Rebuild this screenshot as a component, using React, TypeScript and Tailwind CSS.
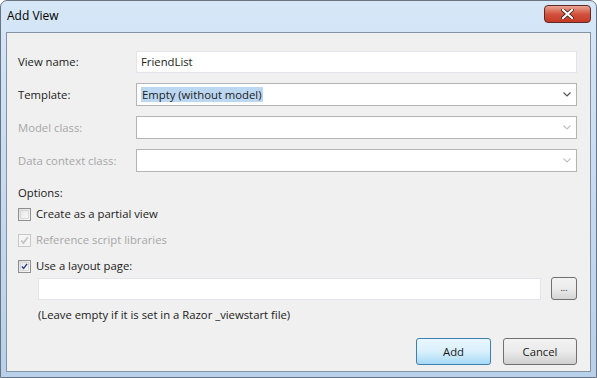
import React from "react";

const font = { fontFamily: '"Open Sans", "Noto Sans", Arial, sans-serif' };

function Chevron({ disabled }: { disabled?: boolean }) {
  return (
    <svg width="8" height="5" viewBox="0 0 8 5" className="mr-[5px]">
      <path d="M0.5 0.5 L4 4 L7.5 0.5" fill="none" stroke={disabled ? "#c2c2c2" : "#555"} strokeWidth="1.2" />
    </svg>
  );
}

function Combo({ children, disabled }: { children?: React.ReactNode; disabled?: boolean }) {
  return (
    <div className="flex-1 h-[23px] bg-white border border-[#b4b4b4] flex items-center justify-between">
      <div className="pl-[4px] flex items-center">{children}</div>
      <Chevron disabled={disabled} />
    </div>
  );
}

function CheckBox({ checked, disabled }: { checked?: boolean; disabled?: boolean }) {
  return (
    <div
      className={`w-[13px] h-[13px] border flex items-center justify-center ${
        disabled ? "border-[#c8c8c8] bg-[#f4f4f4]" : "border-[#8e8f8f] bg-gradient-to-br from-[#dcdcdc] to-[#fbfbfb]"
      }`}
    >
      <div className={`w-[9px] h-[9px] flex items-center justify-center ${disabled ? "" : "bg-gradient-to-br from-[#e6e6e6] to-[#fafafa] border border-[#d8d8d8]"}`}>
        {checked && (
          <svg width="9" height="9" viewBox="0 0 9 9">
            <path d="M1.2 4.5 L3.4 7 L7.8 1.2" fill="none" stroke={disabled ? "#c4c4c4" : "#2a3f8f"} strokeWidth="1.8" />
          </svg>
        )}
      </div>
    </div>
  );
}

export default function App() {
  return (
    <div className="w-[597px] h-[378px] overflow-hidden bg-white" style={font}>
      <div className="w-full h-full flex flex-col rounded-t-[7px] border border-[#6a7480] bg-gradient-to-b from-[#d6e7f8] via-[#c6dbf1] to-[#b8d0ea]">
        <div className="h-[31px] flex items-start justify-between shrink-0">
          <div className="text-[12px] text-black pl-[6px] pt-[7px] leading-[16px]">Add View</div>
          <div className="mt-[4px] mr-[5px] w-[47px] h-[18px] rounded-[4px] border border-[#5e2a24] bg-gradient-to-b from-[#e9a394] via-[#d2523f] to-[#c43a26] flex items-center justify-center">
            <svg width="13" height="10" viewBox="0 0 13 10">
              <path d="M2 1 L11 9 M11 1 L2 9" stroke="#3a1610" strokeWidth="3.6" strokeLinecap="square" />
              <path d="M2 1 L11 9 M11 1 L2 9" stroke="#ffffff" strokeWidth="2.2" strokeLinecap="square" />
            </svg>
          </div>
        </div>
        <div className="mx-[5px] flex-1 border border-[#8592a2] bg-[#f0f0f0] flex flex-col pl-[11px] pr-[13px] pt-[17px] text-[11.3px] text-[#1a1a1a] leading-[16px]">
          <div className="flex items-center h-[23px]">
            <div className="w-[118px]">View name:</div>
            <div className="flex-1 h-[22px] bg-white border border-[#e2e4ea] flex items-center pl-[4px]">FriendList</div>
          </div>
          <div className="flex items-center h-[23px] mt-[10px]">
            <div className="w-[118px]">Template:</div>
            <Combo>
              <span className="bg-[#bcd7f2] px-[1px] leading-[15px]">Empty (without model)</span>
            </Combo>
          </div>
          <div className="flex items-center h-[23px] mt-[10px]">
            <div className="w-[118px] text-[#a7a7a7]">Model class:</div>
            <Combo disabled />
          </div>
          <div className="flex items-center h-[23px] mt-[10px]">
            <div className="w-[118px] text-[#a7a7a7]">Data context class:</div>
            <Combo disabled />
          </div>
          <div className="mt-[13px]">Options:</div>
          <div className="flex items-center gap-[5px] mt-[5px] h-[16px]">
            <CheckBox />
            <span>Create as a partial view</span>
          </div>
          <div className="flex items-center gap-[5px] mt-[10px] h-[16px] text-[#a7a7a7]">
            <CheckBox checked disabled />
            <span>Reference script libraries</span>
          </div>
          <div className="flex items-center gap-[5px] mt-[10px] h-[16px]">
            <CheckBox checked />
            <span>Use a layout page:</span>
          </div>
          <div className="flex items-center ml-[20px] mt-[3px] gap-[10px]">
            <div className="flex-1 h-[22px] bg-white border border-[#e2e4ea]" />
            <div className="w-[26px] h-[23px] rounded-[3px] border border-[#707070] bg-gradient-to-b from-[#f2f2f2] via-[#ebebeb] to-[#d4d4d4] flex items-center justify-center text-[9px] leading-none pb-[2px]">
              ...
            </div>
          </div>
          <div className="ml-[20px] mt-[7px]">(Leave empty if it is set in a Razor _viewstart file)</div>
          <div className="flex justify-end gap-[12px] mt-[15px]">
            <div className="w-[75px] h-[27px] rounded-[3px] border border-[#3c7fb1] bg-gradient-to-b from-[#eaf6fd] via-[#d9f0fc] to-[#a7d9f5] flex items-center justify-center">
              Add
            </div>
            <div className="w-[74px] h-[27px] rounded-[3px] border border-[#707070] bg-gradient-to-b from-[#f2f2f2] via-[#ebebeb] to-[#d0d0d0] flex items-center justify-center">
              Cancel
            </div>
          </div>
        </div>
        <div className="h-[5px] shrink-0" />
      </div>
    </div>
  );
}
